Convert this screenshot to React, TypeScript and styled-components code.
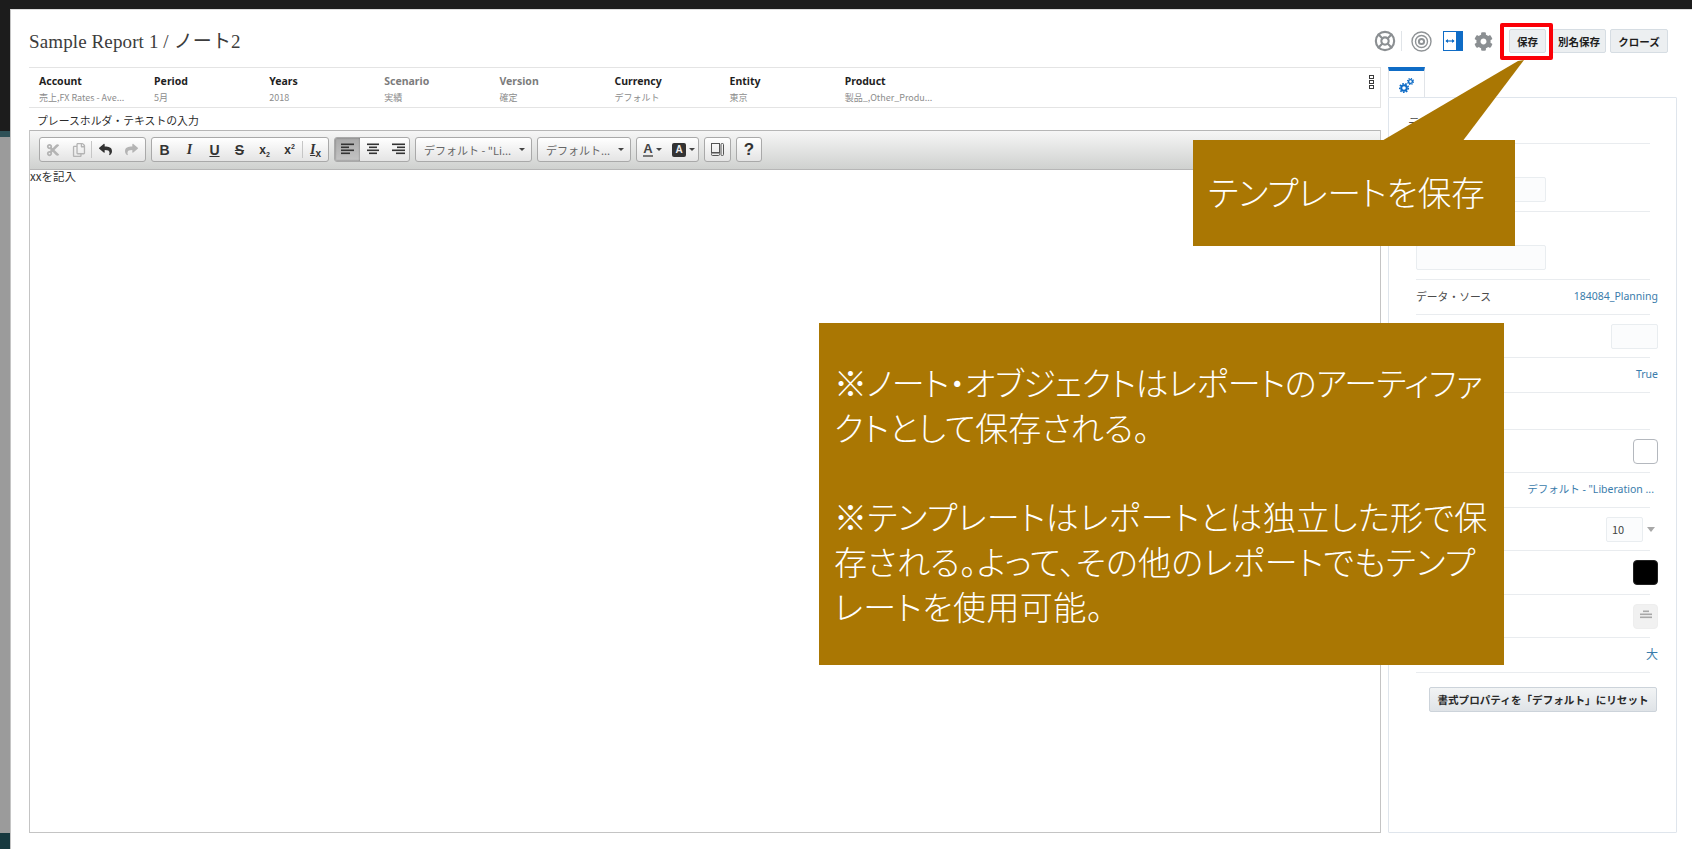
import React from "react";
import styled, { createGlobalStyle } from "styled-components";
import { FaCog, FaCut, FaRegCopy, FaReply, FaShare } from "react-icons/fa";
import { LifeBuoy } from "lucide-react";

const UI_FONT = `"Noto Sans", "Open Sans", "Noto Sans CJK JP", sans-serif`;
const JP_FONT = `"Noto Sans CJK JP", "Noto Sans", sans-serif`;

const GlobalStyle = createGlobalStyle`
  html, body {
    margin: 0;
    padding: 0;
    background: #fff;
  }
  * {
    box-sizing: border-box;
  }
`;

const Page = styled.div`
  position: relative;
  width: 1692px;
  height: 849px;
  overflow: hidden;
  padding: 9px 0 0 10px;
  font-family: ${UI_FONT};
  background: linear-gradient(
    to bottom,
    #1c1c1c 0,
    #1c1c1c 131px,
    #2f5157 131px,
    #2f5157 137px,
    #9b9b9b 137px,
    #9b9b9b 833px,
    #17393f 833px
  );
`;

const Dialog = styled.div`
  height: 840px;
  background: #fff;
  border-top: 1px solid #dcdcdc;
  border-left: 1px solid #c4c4c4;
  padding-left: 18px;
  display: flex;
  flex-direction: column;
`;

const Header = styled.header`
  height: 57px;
  flex: none;
  display: flex;
  align-items: center;
  justify-content: space-between;
  padding: 5px 24px 0 0;
`;

const Title = styled.h1`
  margin: 0 0 4px;
  font-family: "Liberation Serif", "Noto Sans CJK JP", serif;
  font-size: 19px;
  font-weight: 400;
  letter-spacing: 0.12px;
  color: #3c3c3c;
`;

const Actions = styled.div`
  display: flex;
  align-items: center;
`;

const IconSlot = styled.span<{ $w: number; $c?: string }>`
  width: ${(p) => p.$w}px;
  display: flex;
  justify-content: center;
  align-items: center;
  color: ${(p) => p.$c || "#8b8f92"};
`;

const Divider = styled.span`
  width: 1px;
  height: 20px;
  background: #e0e4e8;
  margin: 0 9px 0 5px;
`;

const HeadButton = styled.button<{ $mr: number }>`
  height: 24px;
  padding: 0;
  width: ${(p) => p.$mr}px;
  margin-left: 4px;
  border: 1px solid #d6dde3;
  border-radius: 2px;
  background: #eceff1;
  font-family: ${JP_FONT};
  font-size: 10.5px;
  font-weight: 700;
  color: #1d1d1d;
`;

const Body = styled.div`
  flex: 1;
  display: flex;
  gap: 7px;
  padding-right: 15px;
  padding-bottom: 16px;
  min-height: 0;
`;

const Main = styled.main`
  width: 1352px;
  display: flex;
  flex-direction: column;
`;

const PovBar = styled.div`
  position: relative;
  height: 41px;
  flex: none;
  display: grid;
  grid-template-columns: repeat(8, 115.1px);
  padding: 6px 0 0 10px;
  border: 1px solid #e4e4e4;
  border-left: 0;
`;

const PovCell = styled.div<{ $muted?: boolean }>`
  b {
    display: block;
    font-size: 10.5px;
    line-height: 14px;
    font-weight: 700;
    color: ${(p) => (p.$muted ? "#7c7c7c" : "#1f1f1f")};
  }
  span {
    display: block;
    margin-top: 3px;
    font-family: ${JP_FONT};
    font-size: 9px;
    line-height: 14px;
    color: #8c8c8c;
  }
`;

const PovMenu = styled.div`
  position: absolute;
  right: 6px;
  top: 7px;
  display: flex;
  flex-direction: column;
  gap: 1px;
  i {
    display: block;
    width: 5px;
    height: 4px;
    border: 1px solid #3b3b3b;
  }
`;

const PlaceholderLabel = styled.div`
  height: 22px;
  flex: none;
  padding-left: 8px;
  font-family: ${JP_FONT};
  font-size: 10.85px;
  line-height: 24px;
  color: #2b2b2b;
`;

const Editor = styled.div`
  flex: 1;
  display: flex;
  flex-direction: column;
  border: 1px solid #c4c4c4;
  border-top: 0;
`;

const Toolbar = styled.div`
  height: 40px;
  flex: none;
  display: flex;
  align-items: flex-start;
  gap: 5px;
  padding: 6px 0 0 9px;
  border-top: 1px solid #b6b6b6;
  border-bottom: 1px solid #b6b6b6;
  background: linear-gradient(to bottom, #f6f6f6, #cfd1cf);
`;

const ToolGroup = styled.div<{ $w: number }>`
  width: ${(p) => p.$w}px;
  height: 25px;
  display: flex;
  align-items: center;
  border: 1px solid #a9a9a9;
  border-radius: 3px;
  background: linear-gradient(to bottom, #ffffff, #e4e4e4);
  overflow: hidden;
`;

const Tool = styled.span<{ $w?: number; $off?: boolean; $on?: boolean }>`
  width: ${(p) => p.$w || 25}px;
  height: 100%;
  flex: none;
  display: flex;
  align-items: center;
  justify-content: center;
  font-family: "Liberation Sans", sans-serif;
  font-size: 14px;
  font-weight: 700;
  color: ${(p) => (p.$off ? "#b4b4b4" : "#333")};
  background: ${(p) =>
    p.$on ? "linear-gradient(to bottom, #aaa, #c4c4c4)" : "transparent"};
  box-shadow: ${(p) => (p.$on ? "inset 0 0 2px #666" : "none")};
`;

const ToolSep = styled.span`
  width: 1px;
  height: 17px;
  flex: none;
  background: #c6c6c6;
`;

const Glyph = styled.span<{ $italic?: boolean; $under?: boolean; $strike?: boolean }>`
  font-style: ${(p) => (p.$italic ? "italic" : "normal")};
  text-decoration: ${(p) =>
    p.$under ? "underline" : p.$strike ? "line-through" : "none"};
  font-family: ${(p) =>
    p.$italic ? `"Liberation Serif", serif` : `"Liberation Sans", sans-serif`};
`;

const Script = styled.span`
  font-size: 12px;
  sub,
  sup {
    font-size: 7px;
    line-height: 0;
  }
`;

const Combo = styled.div<{ $w: number }>`
  width: ${(p) => p.$w}px;
  height: 25px;
  display: flex;
  align-items: center;
  justify-content: space-between;
  padding: 0 6px 0 8px;
  border: 1px solid #a9a9a9;
  border-radius: 3px;
  background: linear-gradient(to bottom, #ffffff, #e4e4e4);
  font-family: ${JP_FONT};
  font-size: 11px;
  color: #666;
  white-space: nowrap;
`;

const Caret = styled.i`
  width: 0;
  height: 0;
  border: 3px solid transparent;
  border-top: 3px solid #444;
  border-bottom: 0;
  margin-left: 3px;
  flex: none;
`;

const ColorBlock = styled.span`
  width: 14px;
  height: 14px;
  display: flex;
  align-items: center;
  justify-content: center;
  background: #333;
  border-radius: 2px;
  color: #eee;
  font-size: 10px;
`;

const ColorA = styled.span`
  font-size: 13px;
  line-height: 13px;
  color: #444;
  border-bottom: 2px solid #777;
`;

const EditArea = styled.div`
  flex: 1;
  font-family: ${JP_FONT};
  font-size: 11.5px;
  line-height: 12px;
  color: #333;
`;

const Side = styled.aside`
  width: 289px;
  display: flex;
  flex-direction: column;
`;

const Tab = styled.div`
  width: 37px;
  height: 30px;
  flex: none;
  display: flex;
  align-items: center;
  justify-content: center;
  padding-top: 3px;
  border-top: 4px solid #0f6cc6;
  border-left: 1px solid #e1e4e8;
  border-right: 1px solid #e1e4e8;
`;

const Panel = styled.div`
  flex: 1;
  padding: 0 26px 0 27px;
  border: 1px solid #dfe5ec;
  border-radius: 1px;
`;

const Row = styled.div<{ $h: number; $end?: boolean }>`
  height: ${(p) => p.$h}px;
  display: flex;
  align-items: ${(p) => (p.$end ? "flex-end" : "center")};
  justify-content: space-between;
  padding-bottom: ${(p) => (p.$end ? "9px" : "0")};
  border-bottom: 1px solid #e9ecef;
  font-family: ${JP_FONT};
  font-size: 10.8px;
  color: #4b4b4b;
`;

const RowLabel = styled.span`
  margin-bottom: 3px;
`;

const PanelTitle = styled.div`
  margin-left: -8px;
  font-size: 12px;
  color: #4b4b4b;
  margin-top: 4px;
`;

const Value = styled.span<{ $flush?: boolean; $big?: boolean }>`
  margin-right: ${(p) => (p.$flush ? "0" : "-8px")};
  margin-bottom: 3px;
  font-family: "Noto Sans", "Noto Sans CJK JP", sans-serif;
  font-size: ${(p) => (p.$big ? "12px" : "10.5px")};
  color: #3a7cab;
  white-space: nowrap;
`;

const TextBox = styled.span<{ $w: number; $h?: number }>`
  width: ${(p) => p.$w}px;
  height: ${(p) => p.$h || 25}px;
  display: flex;
  align-items: center;
  padding-left: 5px;
  background: #fbfcfd;
  border: 1px solid #e9edf0;
  border-radius: 2px;
  font-size: 11px;
  color: #444;
`;

const RightEdge = styled.span<{ $inset?: number }>`
  margin-left: auto;
  margin-right: ${(p) => (p.$inset !== undefined ? p.$inset : -8)}px;
  display: flex;
  align-items: center;
  gap: 4px;
`;

const SizeCaret = styled.i`
  width: 0;
  height: 0;
  border: 4px solid transparent;
  border-top: 5px solid #a8a8a8;
  border-bottom: 0;
`;

const Swatch = styled.span<{ $kind: "empty" | "black" | "align" }>`
  width: 25px;
  height: 25px;
  display: flex;
  align-items: center;
  justify-content: center;
  border-radius: 4px;
  border: ${(p) =>
    p.$kind === "empty"
      ? "1px solid #b4b8be"
      : p.$kind === "black"
      ? "1px solid #222"
      : "1px solid #eee"};
  background: ${(p) =>
    p.$kind === "black" ? "#000" : p.$kind === "align" ? "#f1f1f1" : "#fff"};
`;

const ResetRow = styled.div`
  display: flex;
  justify-content: flex-end;
  margin-right: -7px;
  padding-top: 14px;
`;

const ResetButton = styled.button`
  width: 228px;
  height: 25px;
  padding: 0;
  border: 1px solid #ccd3da;
  border-radius: 2px;
  background: linear-gradient(to bottom, #f2f4f5, #dfe3e7);
  font-family: ${JP_FONT};
  font-size: 10.6px;
  font-weight: 700;
  color: #2a2a2a;
  white-space: nowrap;
`;

/* 吹き出し(スクリーンショット上の注釈) */
const RedFrame = styled.div`
  position: absolute;
  left: 1500px;
  top: 23px;
  width: 53px;
  height: 37px;
  border: 4px solid #fb0007;
  border-radius: 2px;
`;

const Pointer = styled.svg`
  position: absolute;
  left: 1380px;
  top: 58px;
`;

const Callout = styled.div<{ $x: number; $y: number; $w: number; $h: number }>`
  position: absolute;
  left: ${(p) => p.$x}px;
  top: ${(p) => p.$y}px;
  width: ${(p) => p.$w}px;
  height: ${(p) => p.$h}px;
  background: #aa7703;
  color: #fff;
  font-family: ${JP_FONT};
  font-weight: 300;
  font-feature-settings: "palt";
  white-space: nowrap;
`;

const SmallCalloutText = styled.div`
  padding: 29px 0 0 15px;
  font-size: 33.6px;
  line-height: 46px;
`;

const BigCalloutText = styled.div`
  padding: 37px 0 0 15px;
  font-size: 33px;
  line-height: 44.8px;
`;

const CalloutLine = styled.div<{ $ls?: number }>`
  min-height: 44.8px;
  letter-spacing: ${(p) => p.$ls || 0}px;
`;

const AlignIcon: React.FC<{ lines: [number, number][]; color?: string }> = ({
  lines,
  color = "#333",
}) => (
  <svg width="14" height="13" viewBox="0 0 14 13">
    {lines.map(([a, b], i) => (
      <rect key={i} x={a} y={i * 3 + 0.5} width={b - a} height="1.6" fill={color} />
    ))}
  </svg>
);

const TargetIcon = () => (
  <svg width="21" height="21" viewBox="0 0 21 21" fill="none" stroke="#8f9396">
    <circle cx="10.5" cy="10.5" r="9.5" strokeWidth="1.4" />
    <circle cx="10.5" cy="10.5" r="6" strokeWidth="1.4" />
    <circle cx="10.5" cy="10.5" r="2.6" strokeWidth="2" />
  </svg>
);

const ToggleIcon = () => (
  <svg width="20" height="20" viewBox="0 0 20 20">
    <rect x="0.5" y="0.5" width="19" height="19" fill="#fff" stroke="#0f6cc6" />
    <rect x="13" y="0" width="7" height="20" fill="#0f6cc6" />
    <path d="M3 10h8" stroke="#0f6cc6" strokeWidth="1.2" />
    <path d="M5 8l-2.6 2L5 12zM9 8l2.6 2L9 12z" fill="#0f6cc6" />
  </svg>
);

const GearsIcon = () => (
  <svg width="15" height="15" viewBox="0 0 15 15" fill="none" stroke="#0f6cc6">
    <circle cx="5" cy="10" r="2.8" strokeWidth="2" />
    <circle cx="5" cy="10" r="4.3" strokeWidth="1.6" strokeDasharray="1.6 1.4" />
    <circle cx="11.5" cy="3.5" r="1.9" strokeWidth="1.4" />
    <circle cx="11.5" cy="3.5" r="3" strokeWidth="1.2" strokeDasharray="1.2 1.15" />
  </svg>
);

const TemplateIcon = () => (
  <svg width="15" height="15" viewBox="0 0 15 15" fill="none" stroke="#555">
    <rect x="1.5" y="1.5" width="8" height="9" />
    <rect x="1.5" y="11" width="8" height="2.5" rx="1" />
    <rect x="11" y="1.5" width="2.5" height="12" rx="1" />
  </svg>
);

const povItems = [
  { label: "Account", value: "売上,FX Rates - Ave..." },
  { label: "Period", value: "5月" },
  { label: "Years", value: "2018" },
  { label: "Scenario", value: "実績", muted: true },
  { label: "Version", value: "確定", muted: true },
  { label: "Currency", value: "デフォルト" },
  { label: "Entity", value: "東京" },
  { label: "Product", value: "製品_,Other_Produ..." },
];

const noteLines = [
  { text: "※ノート・オブジェクトはレポートのアーティファ", ls: -0.5 },
  { text: "クトとして保存される。", ls: 0 },
  { text: "", ls: 0 },
  { text: "※テンプレートはレポートとは独立した形で保", ls: 0.45 },
  { text: "存される。よって、その他のレポートでもテンプ", ls: 0.3 },
  { text: "レートを使用可能。", ls: 0.4 },
];

export default function App() {
  return (
    <Page>
      <GlobalStyle />
      <Dialog>
        <Header>
          <Title>Sample Report 1 / ノート2</Title>
          <Actions>
            <IconSlot $w={22}>
              <LifeBuoy size={22} strokeWidth={2.3} />
            </IconSlot>
            <Divider />
            <IconSlot $w={21}>
              <TargetIcon />
            </IconSlot>
            <IconSlot $w={20} style={{ marginLeft: 11 }}>
              <ToggleIcon />
            </IconSlot>
            <IconSlot $w={20} style={{ marginLeft: 10, marginRight: 12 }}>
              <FaCog size={19} />
            </IconSlot>
            <HeadButton $mr={37}>保存</HeadButton>
            <HeadButton $mr={54} style={{ marginLeft: 6 }}>
              別名保存
            </HeadButton>
            <HeadButton $mr={58}>クローズ</HeadButton>
          </Actions>
        </Header>

        <Body>
          <Main>
            <PovBar>
              {povItems.map((item) => (
                <PovCell key={item.label} $muted={item.muted}>
                  <b>{item.label}</b>
                  <span>{item.value}</span>
                </PovCell>
              ))}
              <PovMenu>
                <i />
                <i />
                <i />
              </PovMenu>
            </PovBar>
            <PlaceholderLabel>プレースホルダ・テキストの入力</PlaceholderLabel>
            <Editor>
              <Toolbar>
                <ToolGroup $w={107}>
                  <Tool $off $w={26}>
                    <FaCut size={14} />
                  </Tool>
                  <Tool $off $w={25}>
                    <FaRegCopy size={14} />
                  </Tool>
                  <ToolSep />
                  <Tool $w={27}>
                    <FaReply size={13} />
                  </Tool>
                  <Tool $off $w={25}>
                    <FaShare size={13} />
                  </Tool>
                </ToolGroup>
                <ToolGroup $w={178}>
                  <Tool>
                    <Glyph>B</Glyph>
                  </Tool>
                  <Tool>
                    <Glyph $italic>I</Glyph>
                  </Tool>
                  <Tool>
                    <Glyph $under>U</Glyph>
                  </Tool>
                  <Tool>
                    <Glyph $strike>S</Glyph>
                  </Tool>
                  <Tool>
                    <Script>
                      x<sub>2</sub>
                    </Script>
                  </Tool>
                  <Tool>
                    <Script>
                      x<sup>2</sup>
                    </Script>
                  </Tool>
                  <ToolSep />
                  <Tool>
                    <Script>
                      <Glyph $italic $under style={{ fontSize: 14 }}>
                        I
                      </Glyph>
                      <sub style={{ fontSize: 10 }}>x</sub>
                    </Script>
                  </Tool>
                </ToolGroup>
                <ToolGroup $w={76}>
                  <Tool $on>
                    <AlignIcon lines={[[0, 13], [0, 8], [0, 13], [0, 9]]} />
                  </Tool>
                  <Tool>
                    <AlignIcon lines={[[1, 13], [3, 11], [1, 13], [3, 11]]} />
                  </Tool>
                  <Tool>
                    <AlignIcon lines={[[1, 14], [6, 14], [1, 14], [5, 14]]} />
                  </Tool>
                </ToolGroup>
                <Combo $w={117}>
                  <span>デフォルト - "Li...</span>
                  <Caret />
                </Combo>
                <Combo $w={94}>
                  <span>デフォルト...</span>
                  <Caret />
                </Combo>
                <ToolGroup $w={63}>
                  <Tool $w={31}>
                    <ColorA>A</ColorA>
                    <Caret />
                  </Tool>
                  <Tool $w={31}>
                    <ColorBlock>A</ColorBlock>
                    <Caret />
                  </Tool>
                </ToolGroup>
                <ToolGroup $w={27}>
                  <Tool $w={25}>
                    <TemplateIcon />
                  </Tool>
                </ToolGroup>
                <ToolGroup $w={26}>
                  <Tool $w={24} style={{ fontSize: 17 }}>
                    ?
                  </Tool>
                </ToolGroup>
              </Toolbar>
              <EditArea>xxを記入</EditArea>
            </Editor>
          </Main>

          <Side>
            <Tab>
              <GearsIcon />
            </Tab>
            <Panel>
              <Row $h={46}>
                <PanelTitle>テキスト</PanelTitle>
              </Row>
              <Row $h={68} $end>
                <TextBox $w={130} />
              </Row>
              <Row $h={68} $end>
                <TextBox $w={130} />
              </Row>
              <Row $h={35}>
                <RowLabel>データ・ソース</RowLabel>
                <Value>184084_Planning</Value>
              </Row>
              <Row $h={43}>
                <RightEdge>
                  <TextBox $w={47} />
                </RightEdge>
              </Row>
              <Row $h={35}>
                <RightEdge>
                  <Value $flush>True</Value>
                </RightEdge>
              </Row>
              <Row $h={37} />
              <Row $h={43}>
                <RightEdge>
                  <Swatch $kind="empty" />
                </RightEdge>
              </Row>
              <Row $h={35}>
                <RightEdge $inset={-4}>
                  <Value $flush>デフォルト - "Liberation ...</Value>
                </RightEdge>
              </Row>
              <Row $h={43}>
                <RightEdge $inset={-5}>
                  <TextBox $w={37}>10</TextBox>
                  <SizeCaret />
                </RightEdge>
              </Row>
              <Row $h={44}>
                <RightEdge>
                  <Swatch $kind="black" />
                </RightEdge>
              </Row>
              <Row $h={43}>
                <RightEdge>
                  <Swatch $kind="align">
                    <AlignIcon lines={[[4, 10], [1, 13], [1, 13]]} color="#a8a8a8" />
                  </Swatch>
                </RightEdge>
              </Row>
              <Row $h={35}>
                <RightEdge>
                  <Value $flush $big>大</Value>
                </RightEdge>
              </Row>
              <ResetRow>
                <ResetButton>書式プロパティを「デフォルト」にリセット</ResetButton>
              </ResetRow>
            </Panel>
          </Side>
        </Body>
      </Dialog>

      <RedFrame />
      <Pointer width="150" height="84" viewBox="0 0 150 84">
        <polygon points="0,84 138,3 144,2 82,84" fill="#aa7703" />
      </Pointer>
      <Callout $x={1193} $y={140} $w={322} $h={106}>
        <SmallCalloutText>テンプレートを保存</SmallCalloutText>
      </Callout>
      <Callout $x={819} $y={323} $w={685} $h={342}>
        <BigCalloutText>
          {noteLines.map((line, i) => (
            <CalloutLine key={i} $ls={line.ls}>
              {line.text}
            </CalloutLine>
          ))}
        </BigCalloutText>
      </Callout>
    </Page>
  );
}
